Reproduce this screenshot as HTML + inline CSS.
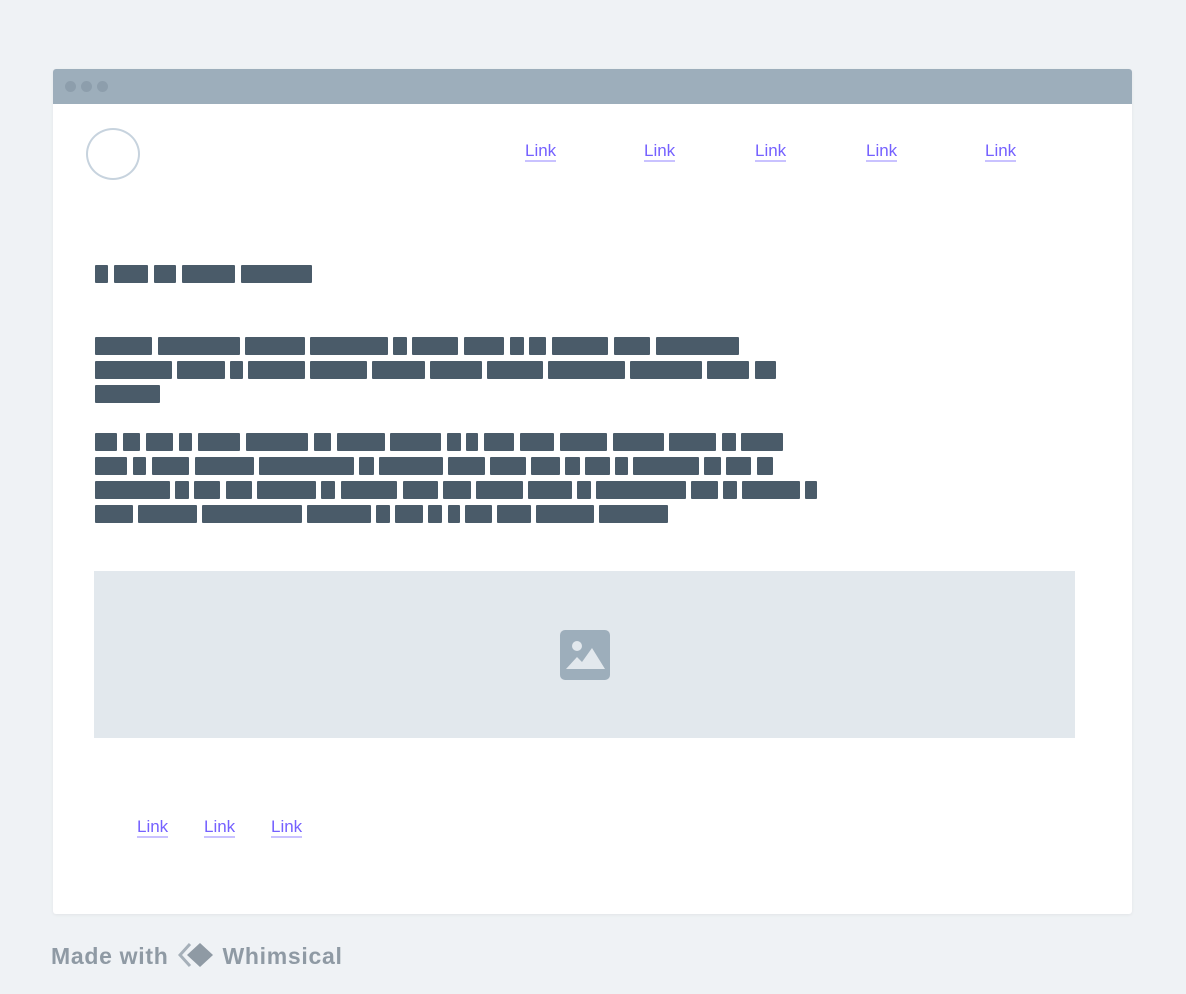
<!DOCTYPE html>
<html><head><meta charset="utf-8"><style>
*{margin:0;padding:0;box-sizing:border-box}
body{width:1186px;height:994px;background:#eff2f5;position:relative;overflow:hidden;font-family:"Liberation Sans",sans-serif}
.win{position:absolute;left:53px;top:69px;width:1079px;height:845px;background:#fff;border-radius:3px;box-shadow:0 1px 3px rgba(0,0,0,.06);overflow:hidden}
.bar{height:35px;background:#9daebb;position:relative}
.dot{position:absolute;top:12px;width:11px;height:11px;border-radius:50%;background:#8d9eac}
.logo{position:absolute;left:86px;top:128px;width:54px;height:52px;border:2px solid #c7d3de;border-radius:50%}
.l{position:absolute;color:#7561ff;font-size:17px;line-height:19px;border-bottom:2px solid #c9c2ff;padding-bottom:0px}
.b{position:absolute;background:#4a5b69;height:18px;border-radius:1px}
.img{position:absolute;left:94px;top:571px;width:981px;height:167px;background:#e2e8ed}
.foot{position:absolute;left:51px;top:941px;font-size:23px;color:#8f9aa4;font-weight:bold;white-space:nowrap;letter-spacing:0.7px}
</style></head><body>
<div class="win"><div class="bar"><div class="dot" style="left:12px"></div><div class="dot" style="left:28px"></div><div class="dot" style="left:44px"></div></div></div>
<div class="logo"></div>
<span class="l" style="left:525px;top:141px">Link</span>
<span class="l" style="left:644px;top:141px">Link</span>
<span class="l" style="left:755px;top:141px">Link</span>
<span class="l" style="left:866px;top:141px">Link</span>
<span class="l" style="left:985px;top:141px">Link</span>
<span class="l" style="left:137px;top:817px">Link</span>
<span class="l" style="left:204px;top:817px">Link</span>
<span class="l" style="left:271px;top:817px">Link</span>
<div class="img"><svg style="position:absolute;left:466px;top:59px" width="50" height="50" viewBox="0 0 50 50"><rect x="0" y="0" width="50" height="50" rx="5" fill="#9daebb"/><circle cx="17" cy="16" r="5" fill="#e2e8ed"/><path d="M6 39 L17 27 L22 32 L32 18 L45 39 Z" fill="#e2e8ed"/></svg></div>
<div id="bl"></div>
<div class="foot">Made with<svg width="38" height="28" viewBox="0 0 38 28" style="vertical-align:-5px;margin:0 6px 0 10px"><path d="M12 3 L2 14 L12 25" fill="none" stroke="#a6b0b9" stroke-width="3"/><path d="M22 2 L35 14 L22 26 L9 14 Z" fill="#8f9aa4"/></svg>Whimsical</div>
<script>
var rows=[[265,[95,108,114,148,154,176,182,235,241,312]],
[337,[95,152,158,240,245,305,310,388,393,407,412,458,464,504,510,524,529,546,552,608,614,650,656,739]],
[361,[95,172,177,225,230,243,248,305,310,367,372,425,430,482,487,543,548,625,630,702,707,749,755,776]],
[385,[95,160]],
[433,[95,117,123,140,146,173,179,192,198,240,246,308,314,331,337,385,390,441,447,461,466,478,484,514,520,554,560,607,613,664,669,716,722,736,741,783]],
[457,[95,127,133,146,152,189,195,254,259,354,359,374,379,443,448,485,490,526,531,560,565,580,585,610,615,628,633,699,704,721,726,751,757,773]],
[481,[95,170,175,189,194,220,226,252,257,316,321,335,341,397,403,438,443,471,476,523,528,572,577,591,596,686,691,718,723,737,742,800,805,817]],
[505,[95,133,138,197,202,302,307,371,376,390,395,423,428,442,448,460,465,492,497,531,536,594,599,668]]];
var h='';rows.forEach(function(r){for(var i=0;i<r[1].length;i+=2)h+='<div class="b" style="top:'+r[0]+'px;left:'+r[1][i]+'px;width:'+(r[1][i+1]-r[1][i])+'px"></div>';});
document.getElementById('bl').innerHTML=h;
</script>
</body></html>
